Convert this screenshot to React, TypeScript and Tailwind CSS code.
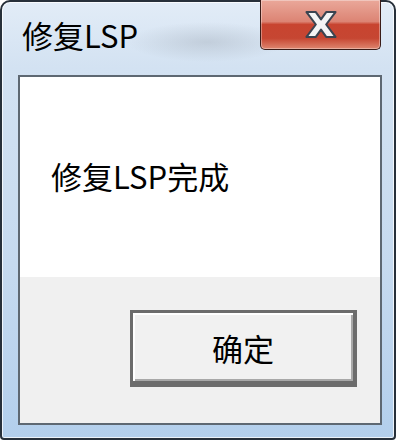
export default function App() {
  return (
    <div className="w-[400px] h-[442px] bg-white font-['Noto_Sans_CJK_SC','Noto_Sans',sans-serif] text-black">
      <div className="w-[396px] h-[440px] rounded-t-[10px] rounded-b-[4px] border-2 border-[#27303a] flex flex-col bg-[radial-gradient(80px_20px_at_205px_40px,rgba(160,170,182,0.4),transparent),linear-gradient(#e2ecf7,#d3e2f2_15%,#c6daef_60%,#b3cfec)] shadow-[inset_0_0_0_1px_rgba(255,255,255,0.75)]">
        <div className="h-[73px] shrink-0 flex justify-between items-start pl-[20px] pr-[13px]">
          <p className="mt-[17px] text-[31px] leading-[31px]">修复LSP</p>
          <CloseButton />
        </div>
        <div className="flex-1 ml-[16px] mr-[12px] mb-[13px] border-2 border-[#5e6872] flex flex-col">
          <div className="h-[200px] bg-white pl-[31px] pt-[83px]">
            <p className="text-[31px] leading-[31px]">修复LSP完成</p>
          </div>
          <div className="flex-1 bg-[#f0f0f0] flex justify-end items-start pt-[33px] pr-[23px]">
            <button className="w-[227px] h-[77px] border-[3px] border-r-[4px] border-b-[6px] border-[#6c6c6c] bg-[#f1f1f1] shadow-[inset_2px_2px_0_#ffffff,inset_-2px_-2px_0_#a8a8a8] flex items-center justify-center text-[31px] leading-[31px]">
              确定
            </button>
          </div>
        </div>
      </div>
    </div>
  );
}

function CloseButton() {
  return (
    <div className="-mt-[2px] w-[121px] h-[50px] rounded-b-[5px] border border-t-0 border-[#3a1c18] bg-[linear-gradient(#eaa89a,#dc8474_44%,#c84430_50%,#c64632_78%,#de8670)] shadow-[inset_0_0_0_1px_rgba(255,255,255,0.35)] flex items-center justify-center">
      <svg width="36" height="29" viewBox="0 0 34 28">
        <polygon
          points="3,2 12,2 17,9 22,2 31,2 22,14 31,26 22,26 17,19 12,26 3,26 12,14"
          fill="#f4f4f4"
          stroke="#3b4450"
          strokeWidth="2"
          strokeLinejoin="round"
        />
      </svg>
    </div>
  );
}
